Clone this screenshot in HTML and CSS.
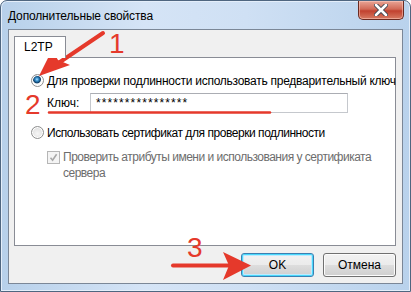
FILE: index.html
```html
<!DOCTYPE html>
<html lang="ru">
  <head>
    <meta charset="UTF-8" />
    <title>Дополнительные свойства</title>
    <link rel="stylesheet" href="styles.css">
  </head>
  <body>
    <div class="window">
      <div class="titlebar">
        <span class="title">Дополнительные свойства</span>
        <button class="close" aria-label="Закрыть">
          <svg width="14" height="12" viewBox="0 0 14 12">
            <path d="M2 1 L12 11 M12 1 L2 11" stroke="#3b4350" stroke-width="4.4" stroke-linecap="round" />
            <path d="M2 1 L12 11 M12 1 L2 11" stroke="#fff" stroke-width="2.6" stroke-linecap="round" />
          </svg>
        </button>
      </div>

      <div class="client">
        <div class="tabs">
          <div class="tab">L2TP</div>
        </div>

        <div class="panel">
          <label class="option">
            <span class="radio checked"></span>
            <span class="wide">Для проверки подлинности использовать предварительный ключ</span>
          </label>

          <div class="key-row">
            <span class="key-label">Ключ:</span>
            <div class="input">****************</div>
          </div>

          <label class="option second">
            <span class="radio"></span>
            <span>Использовать сертификат для проверки подлинности</span>
          </label>

          <label class="check-row">
            <span class="checkbox">
              <svg width="9" height="9" viewBox="0 0 9 9">
                <path d="M1.5 4.8 L3.6 7.2 L7.6 1.2" fill="none" stroke="#a8a8a8" stroke-width="1.6" />
              </svg>
            </span>
            <span class="check-text">Проверить атрибуты имени и использования у сертификата<br>сервера</span>
          </label>
        </div>

        <div class="buttons">
          <button class="btn default">OK</button>
          <button class="btn">Отмена</button>
        </div>
      </div>

      <!-- red annotations drawn over the dialog -->
      <svg class="marks" width="411" height="292" viewBox="0 0 411 292">
        <path d="M103 33 L60 62" stroke="#e5392b" stroke-width="4" stroke-linecap="round" />
        <path d="M39 76 L52 50 L58 60 L70 65 Z" fill="#e5392b" />
        <text x="109" y="53" class="num">1</text>

        <text x="25" y="114" class="num">2</text>
        <path d="M49 112.5 L270 112.5" stroke="#e5392b" stroke-width="2.5" stroke-linecap="round" />

        <text x="187" y="257" class="num">3</text>
        <path d="M173 265.5 L230 265.5" stroke="#e5392b" stroke-width="4" stroke-linecap="round" />
        <path d="M251 265.5 L223 252 L229 265.5 L223 280 Z" fill="#e5392b" />
      </svg>
    </div>
  </body>
</html>
```

FILE: styles.css
```css
body {
  margin: 0;
  font-family: "Liberation Sans", Arial, sans-serif;
  font-size: 12px;
  color: #000;
  overflow: hidden;
}

.window {
  position: relative;
  box-sizing: border-box;
  width: 411px;
  height: 292px;
  display: flex;
  flex-direction: column;
  padding: 0 7px 7px 7px;
  border: 1px solid #4f6680;
  border-radius: 7px 7px 0 0;
  background: linear-gradient(to right, #b7d0ea, #d5e4f6 35%, #cfe0f4 60%, #b9d2ec);
  box-shadow: inset 0 0 0 1px #e4eefa;
  white-space: nowrap;
}

.titlebar {
  height: 28px;
  display: flex;
  justify-content: space-between;
  align-items: flex-start;
}

.title {
  padding-top: 8px;
  letter-spacing: -0.15px;
  color: #000;
}

.close {
  width: 46px;
  height: 19px;
  margin-right: -1px;
  padding: 0;
  display: flex;
  align-items: center;
  justify-content: center;
  border: 1px solid #6a2a21;
  border-top: none;
  border-radius: 0 0 5px 5px;
  background: linear-gradient(#e9a596, #d26a57 45%, #c1412f 55%, #d77a62);
  box-shadow: inset 0 0 0 1px rgba(255, 210, 200, 0.5);
}

.client {
  flex: 1;
  display: flex;
  flex-direction: column;
  padding: 6px 6px 6px 5px;
  background: #f0f0f0;
  border: 1px solid #7b8797;
}

.tabs {
  display: flex;
  position: relative;
  z-index: 1;
  margin-bottom: -1px;
}

.tab {
  height: 21px;
  padding: 0 12px 0 9px;
  line-height: 21px;
  background: #fff;
  border: 1px solid #898c95;
  border-bottom: none;
}

.panel {
  flex: 1;
  background: #fff;
  border: 1px solid #898c95;
  padding: 15px 0 0 16px;
  letter-spacing: -0.45px;
}

.option {
  display: flex;
  align-items: center;
  gap: 3px;
  height: 15px;
}

.option .wide {
  letter-spacing: -0.26px;
}

.option.second {
  margin-top: 12px;
}

.radio {
  flex: none;
  box-sizing: border-box;
  width: 13px;
  height: 13px;
  border-radius: 50%;
  border: 1px solid #8e8f8f;
  background: radial-gradient(circle at 50% 60%, #f6f6f6, #d6d6d6);
  box-shadow: inset 0 0 0 1px #fff;
}

.radio.checked {
  background: radial-gradient(circle at 45% 40%, #b6e2ff 0, #3b98d6 1.5px, #0e3e68 3.5px, #fff 4.5px, #dcdcdc);
}

.key-row {
  display: flex;
  align-items: center;
  margin-top: 5px;
  padding-left: 16px;
  letter-spacing: 0;
}

.key-label {
  width: 43px;
}

.input {
  box-sizing: border-box;
  width: 258px;
  height: 20px;
  padding: 0 5px;
  line-height: 19px;
  letter-spacing: 1.1px;
  border: 1px solid #c5c8cd;
  border-top-color: #abadb3;
  background: #fff;
}

.check-row {
  display: flex;
  align-items: flex-start;
  gap: 3px;
  margin-top: 9px;
  padding-left: 16px;
  color: #6d6d6d;
  line-height: 16px;
  letter-spacing: -0.5px;
}

.checkbox {
  flex: none;
  width: 11px;
  height: 11px;
  margin-top: 2px;
  display: flex;
  align-items: center;
  justify-content: center;
  border: 1px solid #b6b6b6;
  background: #f4f4f4;
}

.buttons {
  display: flex;
  justify-content: flex-end;
  gap: 9px;
  margin-top: 7px;
}

.btn {
  width: 73px;
  height: 24px;
  font-family: inherit;
  font-size: 12px;
  color: #000;
  border: 1px solid #707070;
  border-radius: 3px;
  background: linear-gradient(#f2f2f2, #ebebeb 50%, #dddddd 51%, #cfcfcf);
  box-shadow: inset 0 0 0 1px #fcfcfc;
}

.btn.default {
  border-color: #3c7fb1;
  box-shadow: inset 0 0 0 1px #48d8fb, inset 0 0 0 2px #bdeaff;
}

.marks {
  position: absolute;
  left: -1px;
  top: -1px;
  pointer-events: none;
}

.num {
  font-family: "Liberation Sans", Arial, sans-serif;
  font-size: 28px;
  fill: #e5392b;
}
```
